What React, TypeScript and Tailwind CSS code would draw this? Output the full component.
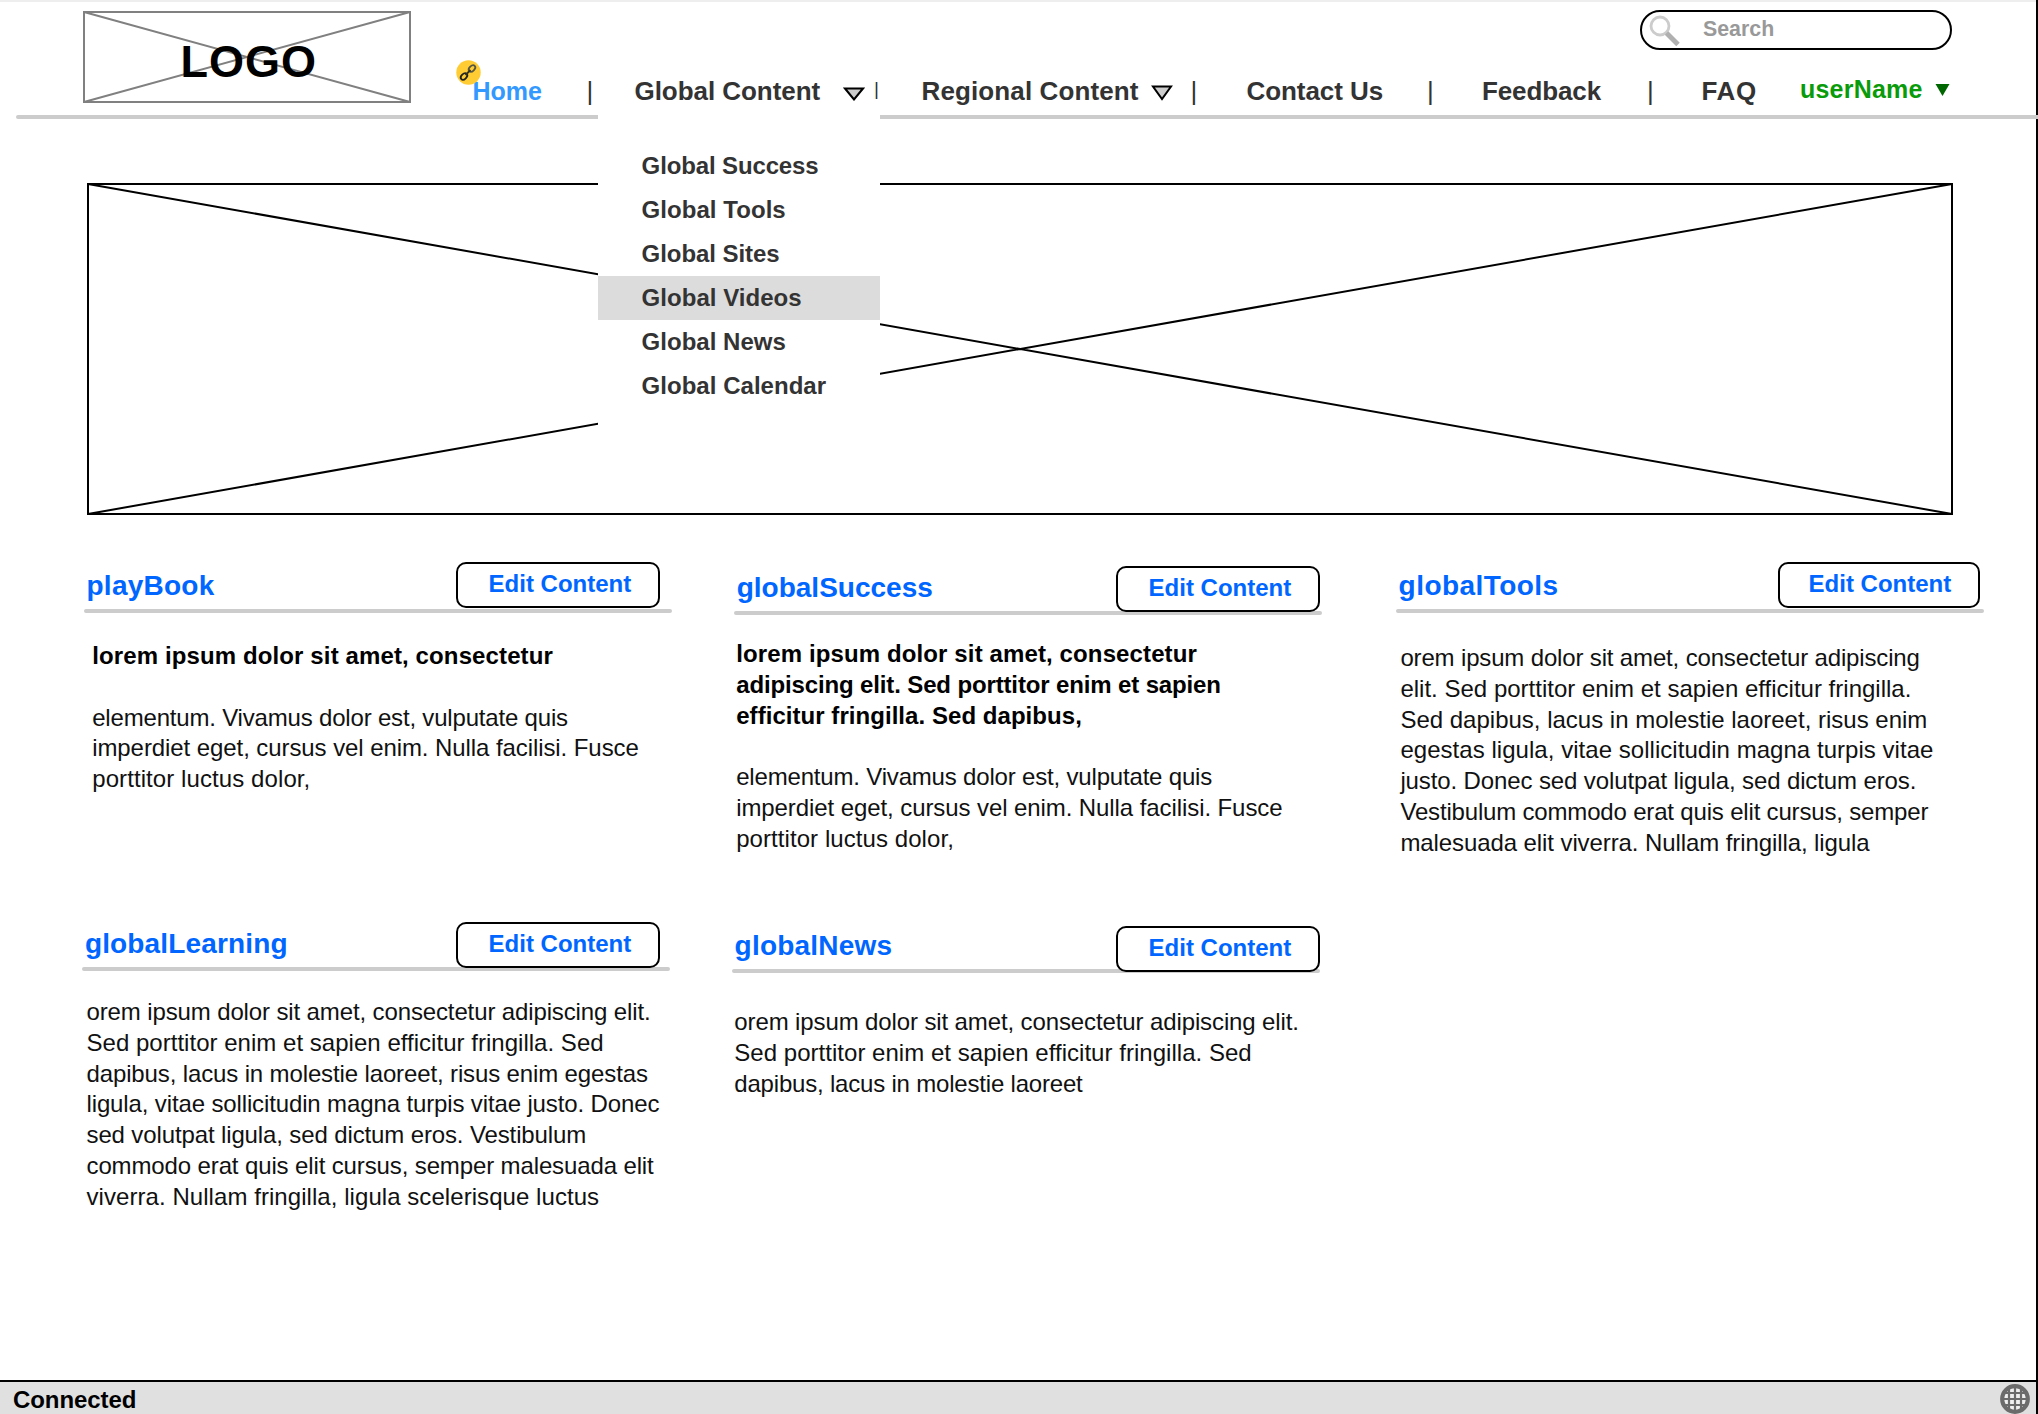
import type { ReactNode } from "react";

type Line = { text: string; tracking: string; bold?: boolean };

type CardProps = {
  title: string;
  titleClass: string;
  cardClass: string;
  buttonClass: string;
  bodyClass: string;
  lines: Line[];
};

const menuItems = [
  { label: "Global Success", tracking: "tracking-[-0.13px]" },
  { label: "Global Tools", tracking: "tracking-[0.05px]" },
  { label: "Global Sites", tracking: "tracking-[-0.06px]" },
  { label: "Global Videos", tracking: "tracking-[0.04px]", active: true },
  { label: "Global News", tracking: "tracking-[0.02px]" },
  { label: "Global Calendar", tracking: "tracking-[0.03px]" },
];

const topRow: CardProps[] = [
  {
    title: "playBook",
    titleClass: "pl-[2.5px] tracking-[0.25px]",
    cardClass: "ml-[84px] w-[588px]",
    buttonClass: "mr-[12px] mb-px w-[204px] pl-[30.6px]",
    bodyClass: "mt-[28px] pl-[8.2px]",
    lines: [
      { text: "lorem ipsum dolor sit amet, consectetur", tracking: "tracking-[0.12px]", bold: true },
      { text: "", tracking: "" },
      { text: "elementum. Vivamus dolor est, vulputate quis", tracking: "tracking-[-0.185px]" },
      { text: "imperdiet eget, cursus vel enim. Nulla facilisi. Fusce", tracking: "tracking-[-0.08px]" },
      { text: "porttitor luctus dolor,", tracking: "tracking-[0.09px]" },
    ],
  },
  {
    title: "globalSuccess",
    titleClass: "pl-[2.7px] tracking-[0px]",
    cardClass: "ml-[62px] mt-[2px] w-[588px]",
    buttonClass: "mr-[2px] -mb-px w-[204px] pl-[30.6px]",
    bodyClass: "mt-[24px] pl-[2.2px]",
    lines: [
      { text: "lorem ipsum dolor sit amet, consectetur", tracking: "tracking-[0.12px]", bold: true },
      { text: "adipiscing elit. Sed porttitor enim et sapien", tracking: "tracking-[-0.135px]", bold: true },
      { text: "efficitur fringilla. Sed dapibus,", tracking: "tracking-[0.05px]", bold: true },
      { text: "", tracking: "" },
      { text: "elementum. Vivamus dolor est, vulputate quis", tracking: "tracking-[-0.18px]" },
      { text: "imperdiet eget, cursus vel enim. Nulla facilisi. Fusce", tracking: "tracking-[-0.085px]" },
      { text: "porttitor luctus dolor,", tracking: "tracking-[0.07px]" },
    ],
  },
  {
    title: "globalTools",
    titleClass: "pl-[2.6px] tracking-[0.45px]",
    cardClass: "ml-[74px] w-[588px]",
    buttonClass: "mr-[4px] mb-px w-[202px] pl-[28.6px]",
    bodyClass: "mt-[30px] pl-[4.4px]",
    lines: [
      { text: "orem ipsum dolor sit amet, consectetur adipiscing", tracking: "tracking-[-0.155px]" },
      { text: "elit. Sed porttitor enim et sapien efficitur fringilla.", tracking: "tracking-[0.01px]" },
      { text: "Sed dapibus, lacus in molestie laoreet, risus enim", tracking: "tracking-[0px]" },
      { text: "egestas ligula, vitae sollicitudin magna turpis vitae", tracking: "tracking-[0.04px]" },
      { text: "justo. Donec sed volutpat ligula, sed dictum eros.", tracking: "tracking-[-0.115px]" },
      { text: "Vestibulum commodo erat quis elit cursus, semper", tracking: "tracking-[-0.175px]" },
      { text: "malesuada elit viverra. Nullam fringilla, ligula", tracking: "tracking-[-0.09px]" },
    ],
  },
];

const bottomRow: CardProps[] = [
  {
    title: "globalLearning",
    titleClass: "pl-[2.9px] tracking-[0.15px]",
    cardClass: "ml-[82px] w-[588px]",
    buttonClass: "mr-[10px] -mb-px w-[204px] pl-[30.6px]",
    bodyClass: "mt-[26px] pl-[4.5px]",
    lines: [
      { text: "orem ipsum dolor sit amet, consectetur adipiscing elit.", tracking: "tracking-[-0.125px]" },
      { text: "Sed porttitor enim et sapien efficitur fringilla. Sed", tracking: "tracking-[0.025px]" },
      { text: "dapibus, lacus in molestie laoreet, risus enim egestas", tracking: "tracking-[-0.13px]" },
      { text: "ligula, vitae sollicitudin magna turpis vitae justo. Donec", tracking: "tracking-[-0.13px]" },
      { text: "sed volutpat ligula, sed dictum eros. Vestibulum", tracking: "tracking-[-0.125px]" },
      { text: "commodo erat quis elit cursus, semper malesuada elit", tracking: "tracking-[-0.125px]" },
      { text: "viverra. Nullam fringilla, ligula scelerisque luctus", tracking: "tracking-[0.06px]" },
    ],
  },
  {
    title: "globalNews",
    titleClass: "pl-[2.6px] tracking-[0.2px]",
    cardClass: "ml-[62px] mt-[2px] w-[588px]",
    buttonClass: "-mb-[3px] w-[204px] pl-[30.6px]",
    bodyClass: "mt-[34px] pl-[2.3px]",
    lines: [
      { text: "orem ipsum dolor sit amet, consectetur adipiscing elit.", tracking: "tracking-[-0.115px]" },
      { text: "Sed porttitor enim et sapien efficitur fringilla. Sed", tracking: "tracking-[0.03px]" },
      { text: "dapibus, lacus in molestie laoreet", tracking: "tracking-[-0.195px]" },
    ],
  },
];

function Card({ title, titleClass, cardClass, buttonClass, bodyClass, lines }: CardProps) {
  return (
    <article className={`shrink-0 ${cardClass}`}>
      <header className="flex h-[52px] items-end justify-between">
        <h2 className={`mb-[7px] text-[28px] leading-8 font-bold text-[#0066ff] ${titleClass}`}>{title}</h2>
        <button
          className={`relative z-10 flex h-[46px] shrink-0 items-start rounded-[10px] border-2 border-black bg-white pt-[4px] text-2xl leading-[31px] font-bold text-[#0066ff] ${buttonClass}`}
        >
          Edit Content
        </button>
      </header>
      <div className="h-1 rounded-full bg-[#cccccc]" />
      <div className={bodyClass}>
        {lines.map((line, i) => (
          <p
            key={i}
            className={`h-[30.8px] text-2xl leading-[30.8px] ${line.bold ? "font-bold text-black" : "text-[#111111]"} ${line.tracking}`}
          >
            {line.text}
          </p>
        ))}
      </div>
    </article>
  );
}

function Placeholder({ className, width, height, stroke }: { className: string; width: number; height: number; stroke: string }) {
  return (
    <svg className={className} width={width} height={height} fill="none" stroke={stroke} strokeWidth="2">
      <rect x="1" y="1" width={width - 2} height={height - 2} />
      <path d={`M1 1L${width - 1} ${height - 1}M${width - 1} 1L1 ${height - 1}`} />
    </svg>
  );
}

function Divider({ className }: { className: string }) {
  return <span className={`w-[7px] shrink-0 font-normal ${className}`}>|</span>;
}

function NavItem({ className, children }: { className: string; children: ReactNode }) {
  return <a className={`shrink-0 ${className}`}>{children}</a>;
}

export default function App() {
  return (
    <div className="relative flex h-[1414px] w-full flex-col border-r-2 border-black bg-white font-['Liberation_Sans',Arial,sans-serif] whitespace-nowrap">
      <div className="h-[2px] shrink-0 bg-[#eeeeee]" />

      <header className="flex h-[113px] shrink-0">
        <div className="mt-[9px] ml-[83px] grid h-[92px] w-[328px] shrink-0">
          <Placeholder className="col-start-1 row-start-1" width={328} height={92} stroke="#808080" />
          <span className="relative col-start-1 row-start-1 mt-[26px] ml-[97.5px] text-[45px] leading-[50px] font-bold tracking-[1px] text-black">
            LOGO
          </span>
        </div>

        <div className="flex grow flex-col">
          <div className="mt-2 mr-[84px] flex h-10 w-[312px] items-start self-end rounded-full border-2 border-black">
            <svg className="mt-[1px] ml-[6px]" width="36" height="34" fill="none">
              <circle cx="12" cy="13" r="9" stroke="#cccccc" strokeWidth="2.8" />
              <path d="M18.500 20L30 31.500" stroke="#b0b0b0" strokeWidth="5" />
            </svg>
            <span className="mt-px ml-[19px] text-[21.35px] leading-8 font-bold text-[#999999]">Search</span>
          </div>

          <nav className="mt-[25.5px] flex h-[30px] items-start text-[26px] leading-[30px] font-bold text-[#333333]">
            <NavItem className="relative ml-[61.5px] w-[114px] text-[25px] text-[#3399ff]">
              Home
              <svg className="absolute -top-[16px] -left-[17px]" width="25" height="25" viewBox="0 0 25 25" fill="none">
                <circle cx="12.500" cy="12.500" r="12.200" fill="#ffcc33" />
                <g strokeWidth="1.800">
                  <ellipse cx="8" cy="16.500" rx="3.800" ry="2.500" transform="rotate(-45 8 16.5)" stroke="#222222" />
                  <ellipse cx="16" cy="8.500" rx="3.800" ry="2.500" transform="rotate(-45 16 8.5)" stroke="#555544" />
                  <path d="M9.500 15L14.500 10" stroke="#333322" />
                </g>
              </svg>
            </NavItem>
            <Divider className="mr-[41px]" />
            <NavItem className="w-[208px] tracking-[-0.05px]">Global Content</NavItem>
            <svg className="mt-[10px] w-[22px] shrink-0" height="15" viewBox="0 0 22 15">
              <path d="M2 2.500H20L11 13.500Z" fill="#cccccc" stroke="#000" strokeWidth="2" />
            </svg>
            <Divider className="-mt-[1.500px] mr-[40.5px] ml-[9.5px] text-[19px]" />
            <NavItem className="w-[229px] tracking-[0.12px]">Regional Content</NavItem>
            <svg className="mt-[8px] w-[22px] shrink-0" height="17" viewBox="0 0 22 17">
              <path d="M2 2.500H20L11 15Z" fill="#cccccc" stroke="#000" strokeWidth="2" />
            </svg>
            <Divider className="mr-[49px] ml-[18px]" />
            <NavItem className="w-[180.500px] tracking-[-0.06px]">Contact Us</NavItem>
            <Divider className="mr-[48px]" />
            <NavItem className="w-[165px] tracking-[-0.12px]">Feedback</NavItem>
            <Divider className="mr-[47.500px]" />
            <NavItem className="w-[98.500px] tracking-[0.6px]">FAQ</NavItem>
            <NavItem className="-mt-[1.500px] w-[134.500px] text-[25px] tracking-[0.22px] text-[#0a9b0a]">userName</NavItem>
            <svg className="mt-[8.500px] w-[15px] shrink-0" height="12" viewBox="0 0 15 12">
              <path d="M0.500 0H14.500L7.500 12Z" fill="#006600" />
            </svg>
          </nav>
        </div>
      </header>

      <div className="relative -mr-[2px] ml-4 h-1 shrink-0 rounded-l-full bg-[#cccccc]" />

      <ul className="absolute top-[112px] left-[598px] z-10 h-[324px] w-[282px] bg-white pt-8">
        {menuItems.map((item) => (
          <li
            key={item.label}
            className={`h-11 pl-[43.600px] text-2xl leading-[43px] font-bold text-[#333333] ${item.tracking} ${item.active ? "bg-[#dcdcdc]" : ""}`}
          >
            {item.label}
          </li>
        ))}
      </ul>

      <Placeholder className="mt-[64px] ml-[87px] shrink-0" width={1866} height={332} stroke="#000000" />

      <main className="mt-[42px] grow">
        <section className="flex h-[358px] items-start">
          {topRow.map((card) => (
            <Card key={card.title} {...card} />
          ))}
        </section>
        <section className="flex items-start">
          {bottomRow.map((card) => (
            <Card key={card.title} {...card} />
          ))}
        </section>
      </main>

      <footer className="flex h-[34px] shrink-0 items-start justify-between border-t-2 border-black bg-[#e0e0e0] pr-[6px] pl-[13px]">
        <span className="mt-[2px] text-2xl leading-8 font-bold tracking-[-0.07px] text-black">Connected</span>
        <svg className="mt-[2px]" width="30" height="30" viewBox="-15 -15 30 30" fill="none">
          <circle r="12.800" stroke="#6b6b6b" strokeWidth="4.200" fill="#eeeeee" />
          <path d="M-6 -11V11M0 -12V12M6 -11V11M-11 -6H11M-12 0H12M-11 6H11" stroke="#6b6b6b" strokeWidth="2.200" />
        </svg>
      </footer>
    </div>
  );
}
